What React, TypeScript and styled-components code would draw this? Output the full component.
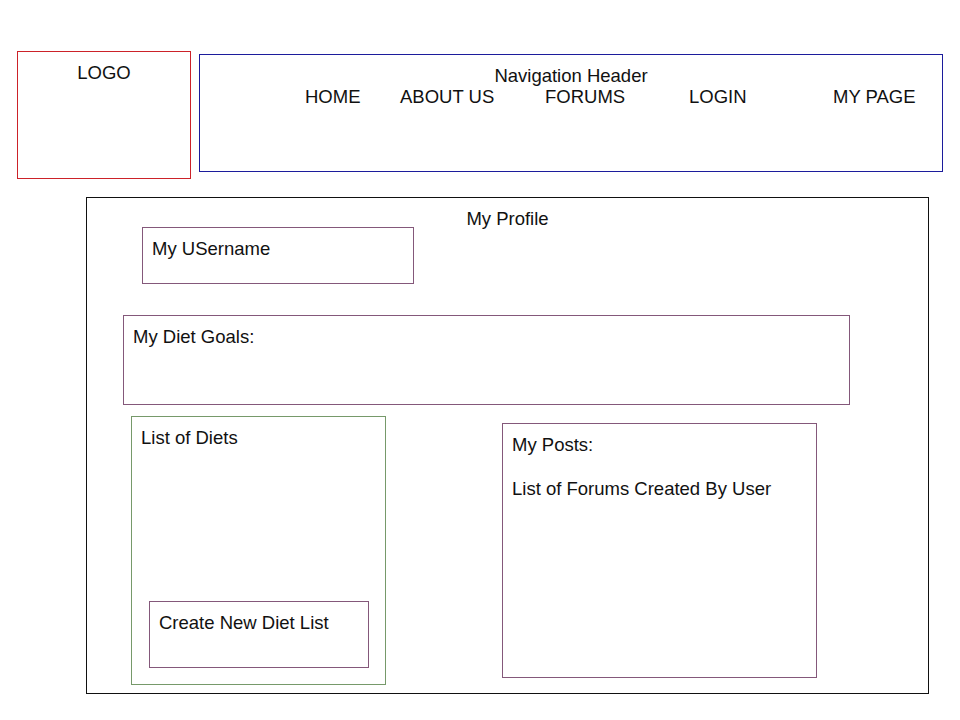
import React from 'react';
import styled, { createGlobalStyle } from 'styled-components';

const GlobalStyle = createGlobalStyle`
    html, body {
        margin: 0;
        padding: 0;
        background: #ffffff;
    }
    body {
        font-family: "Liberation Sans", Arial, sans-serif;
        font-size: 18.5px;
        color: #111111;
    }
`;

const Page = styled.div`
    width: 960px;
    height: 720px;
    box-sizing: border-box;
    padding-top: 51px;
`;

const HeaderRow = styled.div`
    display: flex;
    align-items: flex-start;
    gap: 8px;
    padding-left: 17px;
`;

const LogoBox = styled.div`
    box-sizing: border-box;
    width: 174px;
    height: 128px;
    border: 1px solid #cc2229;
    padding-top: 10px;
    text-align: center;
    line-height: 21px;
`;

const NavBox = styled.nav`
    box-sizing: border-box;
    width: 744px;
    height: 118px;
    margin-top: 3px;
    border: 1px solid #1c1c9c;
    padding-top: 10px;
    line-height: 21px;
`;

const NavTitle = styled.div`
    text-align: center;
`;

const NavLinks = styled.div`
    display: grid;
    grid-template-columns: 95px 145px 144px 144px auto;
    padding-left: 105px;
`;

const NavItem = styled.span`
    white-space: nowrap;
`;

const ProfileBox = styled.main`
    box-sizing: border-box;
    width: 843px;
    height: 497px;
    margin: 18px 0 0 86px;
    border: 1px solid #111111;
    padding-top: 10px;
    display: flex;
    flex-direction: column;
    align-items: flex-start;
`;

const ProfileTitle = styled.div`
    align-self: stretch;
    text-align: center;
    line-height: 21px;
    height: 19px;
`;

type PanelProps = {
    $w: number;
    $h: number;
    $color: string;
};

const Panel = styled.section<PanelProps>`
    box-sizing: border-box;
    width: ${(p) => p.$w}px;
    height: ${(p) => p.$h}px;
    border: 1px solid ${(p) => p.$color};
    padding: 10px 9px 0;
    line-height: 21px;
`;

const UsernamePanel = styled(Panel)`
    margin-left: 55px;
`;

const GoalsPanel = styled(Panel)`
    margin: 31px 0 0 36px;
`;

const BottomRow = styled.div`
    display: flex;
    align-items: flex-start;
    margin: 11px 0 0 44px;
`;

const DietsPanel = styled(Panel)`
    display: flex;
    flex-direction: column;
    align-items: flex-start;
`;

const CreateButton = styled(Panel)`
    margin: auto 0 16px 8px;
`;

const PostsPanel = styled(Panel)`
    margin: 7px 0 0 116px;
`;

const PostsLine = styled.div`
    margin-top: 23px;
`;

const MAUVE = '#84587a';
const GREEN = '#76996a';

const navLinks = ['HOME', 'ABOUT US', 'FORUMS', 'LOGIN', 'MY PAGE'];

export default function App() {
    return (
        <>
            <GlobalStyle />
            <Page>
                <HeaderRow>
                    <LogoBox>LOGO</LogoBox>
                    <NavBox>
                        <NavTitle>Navigation Header</NavTitle>
                        <NavLinks>
                            {navLinks.map((l) => (
                                <NavItem key={l}>{l}</NavItem>
                            ))}
                        </NavLinks>
                    </NavBox>
                </HeaderRow>

                <ProfileBox>
                    <ProfileTitle>My Profile</ProfileTitle>
                    <UsernamePanel $w={272} $h={57} $color={MAUVE}>
                        My USername
                    </UsernamePanel>
                    <GoalsPanel $w={727} $h={90} $color={MAUVE}>
                        My Diet Goals:
                    </GoalsPanel>
                    <BottomRow>
                        <DietsPanel $w={255} $h={269} $color={GREEN}>
                            List of Diets
                            <CreateButton $w={220} $h={67} $color={MAUVE}>
                                Create New Diet List
                            </CreateButton>
                        </DietsPanel>
                        <PostsPanel $w={315} $h={255} $color={MAUVE}>
                            My Posts:
                            <PostsLine>List of Forums Created By User</PostsLine>
                        </PostsPanel>
                    </BottomRow>
                </ProfileBox>
            </Page>
        </>
    );
}
